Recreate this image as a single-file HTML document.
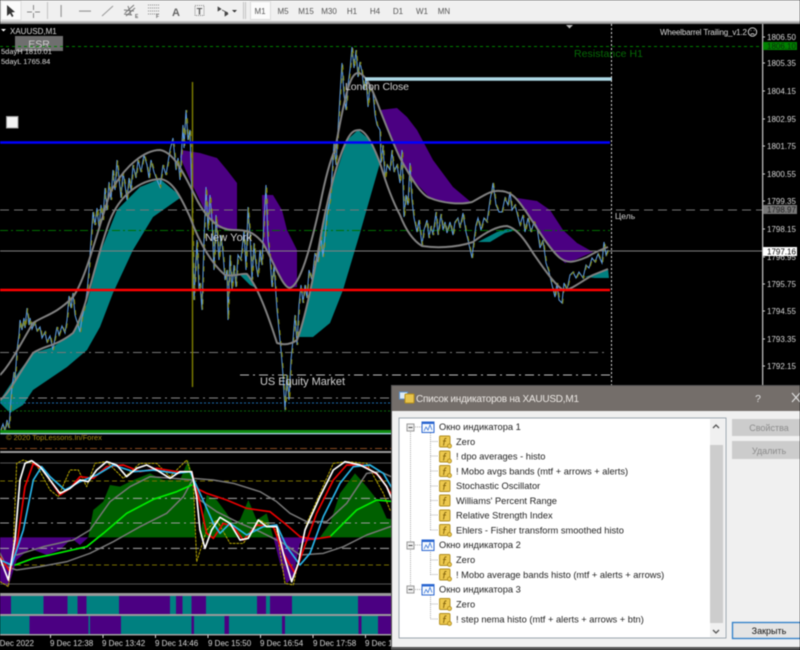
<!DOCTYPE html>
<html><head><meta charset="utf-8"><title>XAUUSD,M1</title>
<style>
html,body{margin:0;padding:0;background:#000;width:800px;height:650px;overflow:hidden}
svg{display:block;font-family:"Liberation Sans",Tahoma,sans-serif;filter:blur(.4px)}
.ax{font-size:8px;fill:#d8d8d8}
.tb{font-size:8px;fill:#555;text-anchor:middle}
.tr{font-size:9.3px;fill:#222}
.tm{font-size:8px;fill:#d8d8d8}
</style></head><body>
<svg width="800" height="650" viewBox="0 0 800 650" xmlns="http://www.w3.org/2000/svg">
<defs>
<path id="pr" d="M0 432L3 424L5 432L7 420L9 428L11 398L12 387L14 372L15 380L17 350L19 335L20 320L22 330L24 318L25 328L27 308L29 325L30 318L32 329L35 322L37 331L40 327L42 338L45 332L47 342L50 336L53 350L55 338L57 327L59 335L62 326L65 333L67 320L69 296L71 308L73 293L75 315L78 325L80 332L82 318L85 305L87 292L89 270L91 240L93 212L95 225L97 208L99 228L101 205L103 220L105 188L107 210L109 182L111 200L113 170L115 190L117 160L119 178L121 198L123 172L125 185L127 200L129 178L131 190L133 165L136 178L138 160L141 172L144 155L147 165L149 178L151 160L154 172L157 180L160 187L163 165L166 175L170 150L173 138L176 170L178 158L180 180L183 125L184 148L186 110L188 140L190 130L192 200L194 300L197 240L199 290L200 283L202 310L204 240L206 187L208 230L210 195L212 220L214 270L216 215L219 260L221 235L223 253L225 280L227 270L228 320L230 255L232 290L234 265L236 287L238 255L241 260L244 230L246 270L248 207L250 235L252 280L254 243L256 265L258 277L260 250L262 265L264 220L266 185L268 240L270 258L272 287L274 265L277 310L279 330L281 350L283 375L285 410L287 375L289 400L291 360L293 340L295 315L297 345L299 305L301 285L303 303L305 285L307 298L309 270L312 280L315 253L318 262L321 237L323 257L325 235L327 215L330 200L332 175L334 143L336 165L338 130L340 95L342 63L344 95L346 110L348 85L350 70L352 47L354 68L356 50L358 77L360 62L362 72L364 90L366 78L368 107L370 85L373 93L375 115L377 125L380 130L381 163L383 145L385 180L387 165L390 170L392 150L394 172L397 165L400 183L402 150L404 217L406 195L408 205L410 163L412 200L414 218L417 232L419 220L422 245L424 230L427 220L429 238L431 226L433 235L436 212L438 235L441 214L443 230L445 222L447 233L450 222L453 235L455 222L458 218L460 228L463 213L466 232L468 240L472 258L474 240L476 225L478 218L481 230L484 218L487 222L490 200L492 190L493 183L496 205L499 212L502 212L505 198L508 205L510 192L512 210L515 205L517 213L520 225L523 215L525 232L528 218L531 232L534 222L537 227L540 248L543 240L546 263L549 272L552 285L555 297L557 283L559 300L562 303L564 283L567 290L570 275L573 272L576 278L579 272L583 278L586 265L589 268L592 258L595 262L598 254L602 263L604 242L606 255L608 250"/>
</defs>

<rect x="0" y="0" width="800" height="650" fill="#000"/>

<!-- ribbons -->
<g stroke="none">
<path fill="#008080" d="M0 400L20 370L33 353L53 347L73 333L87 303L100 253L117 210L140 187L160 179L177 193L180 198L153 217L133 250L113 293L100 327L87 350L67 367L33 390L23 405L10 413L0 403Z"/>
<path fill="#008080" d="M240 275L247 274L258 289L250 285Z"/>
<path fill="#008080" d="M298 337L310 293L320 240L333 183L347 140L358 130L370 140L380 163L360 233L343 290L330 323L313 337L300 337Z"/>
<path fill="#008080" d="M478 242L497 232L507 229L517 230L505 233L490 242Z"/>
<path fill="#008080" d="M585 277L608 269L609 278L595 278Z"/>
<path fill="#4b0082" d="M181 150L200 153L217 158L227 170L237 183L237 230L217 228L203 207L190 180L180 157Z"/>
<path fill="#4b0082" d="M262 195L273 195L282 210L287 230L297 250L297 287L287 288L275 270L263 243Z"/>
<path fill="#4b0082" d="M380 110L397 108L407 117L417 130L433 160L453 187L472 203L450 203L430 198L413 180L400 158L388 130Z"/>
<path fill="#4b0082" d="M517 198L537 201L550 210L563 230L577 243L593 252L575 260L565 263L555 254L540 234L527 213Z"/>
</g>

<!-- horizontal lines under price -->
<line x1="0" y1="46.5" x2="762" y2="46.5" stroke="#008000" stroke-dasharray="3 3"/>
<line x1="0" y1="210" x2="762" y2="210" stroke="#777" stroke-dasharray="9 5"/>
<line x1="0" y1="230.5" x2="610" y2="230.5" stroke="#007000" stroke-dasharray="8 3 2 3"/>
<line x1="0" y1="251" x2="762" y2="251" stroke="#808080"/>
<line x1="0" y1="352.5" x2="605" y2="352.5" stroke="#777" stroke-dasharray="9 4 2 4"/>
<line x1="240" y1="375" x2="610" y2="375" stroke="#bbb" stroke-dasharray="9 4 2 4"/>
<line x1="0" y1="398" x2="392" y2="398" stroke="#888" stroke-dasharray="9 4 2 4"/>
<line x1="0" y1="403" x2="392" y2="403" stroke="#1e6eb0" stroke-dasharray="2 2"/>
<line x1="0" y1="411" x2="392" y2="411" stroke="#0a6a0a" stroke-dasharray="2 2"/>

<!-- price -->
<g fill="none" stroke-width="1">
<use href="#pr" stroke="#5f9fe6"/>
<use href="#pr" stroke="#808000" stroke-dasharray="5 6" transform="translate(.8,0)"/>
<line x1="192.500" y1="82" x2="192.500" y2="387" stroke="#808000" stroke-width="1.400"/>
</g>

<!-- envelope -->
<g fill="none" stroke="#808080" stroke-width="2" stroke-linejoin="round">
<path d="M0 375C10 365 20 345 33 323C45 315 55 315 73 297C85 280 95 240 110 193C125 165 145 150 160 150C172 152 180 165 197 200C205 215 217 230 233 230C245 230 252 230 263 243C275 265 283 288 290 288C300 285 310 250 320 205C325 180 330 160 335 150C345 95 350 73 358 73C365 73 372 88 380 110C388 130 395 148 400 158C408 172 420 195 430 198C442 203 460 205 472 202C482 197 490 190 500 191C512 191 518 200 527 213C535 225 550 250 560 258C568 264 575 262 587 257C595 252 600 250 608 247"/>
<path d="M0 400C8 395 15 380 33 353C45 345 55 347 73 333C87 310 95 260 110 220C120 195 140 180 160 179C172 180 180 195 190 217C200 245 213 265 225 275C235 277 240 273 247 274C258 287 268 315 277 343C283 345 290 345 297 340C305 320 315 270 320 240C327 200 337 160 347 140C352 130 356 130 360 130C368 133 375 150 380 163C385 180 392 200 400 215C405 228 412 240 422 246C435 248 455 248 473 242C482 235 495 226 507 226C515 228 522 235 533 253C540 263 553 283 563 290C570 291 580 282 593 275C598 273 603 271 608 269"/>
</g>

<!-- heavy lines -->
<line x1="0" y1="142.5" x2="610" y2="142.5" stroke="#0000ff" stroke-width="2.4"/>
<line x1="0" y1="290" x2="610" y2="290" stroke="#ff0000" stroke-width="2.4"/>
<line x1="365" y1="79" x2="612" y2="79" stroke="#add8e6" stroke-width="3.4"/>
<line x1="611.5" y1="24" x2="611.5" y2="385" stroke="#ddd" stroke-dasharray="2 2"/>

<!-- chart labels -->
<g fill="#d0d0d0">
<text x="345" y="90" font-size="10.5px" textLength="64">London Close</text>
<text x="205" y="241" font-size="11px" textLength="47">New York</text>
<text x="260" y="385" font-size="11px" textLength="85">US Equity Market</text>
<text x="615" y="219" font-size="8.5px">Цель</text>
</g>
<text x="574" y="57" font-size="10.5px" fill="#056a05" textLength="69">Resistance H1</text>
<text x="660" y="35" font-size="8px" fill="#ddd" textLength="87">Wheelbarrel Trailing_v1.2</text>
<circle cx="752.5" cy="32" r="4.2" fill="none" stroke="#ddd" stroke-width=".9"/>
<path d="M750.5 30.5h.8M753.8 30.5h.8M750.5 34.6q2-1.8 4 0" stroke="#ddd" stroke-width=".8" fill="none"/>
<path d="M566 25h7l-3.5 3.5z" fill="#bbb"/>

<path d="M1 29h5l-2.500 2.500z" fill="#fff"/>
<text x="10" y="34" font-size="8px" fill="#ddd">XAUUSD,M1</text>
<rect x="15" y="36" width="48" height="15" fill="#6f6f6f"/>
<text x="39" y="47.500" font-size="10.500px" fill="#ccc" text-anchor="middle">ESR</text>
<line x1="0" y1="46.500" x2="130" y2="46.500" stroke="#008000" stroke-dasharray="3 3"/>
<text x="1" y="54" font-size="7.500px" fill="#ddd">5dayH 1810.01</text>
<text x="1" y="64" font-size="7.500px" fill="#ddd">5dayL 1765.84</text>
<rect x="6.500" y="116.500" width="11.500" height="11.500" fill="#f4f4f4" stroke="#999"/>

<!-- bottom of main window -->
<rect x="0" y="430" width="392" height="3" fill="#0f8a10"/>
<rect x="0" y="433" width="392" height="1.300" fill="#a8d8e8"/>
<text x="6" y="440" font-size="7.500px" fill="#a88a10">© 2020 TopLessons.In/Forex</text>
<line x1="0" y1="448.500" x2="392" y2="448.500" stroke="#8a4a20" stroke-dasharray="7 3 2 3"/>

<!-- subwindow -->
<rect x="0" y="451" width="392" height="2" fill="#9a9a9a"/>
<g transform="translate(0,430) scale(.33333)" fill="none">
<path stroke="none" fill="#005f00" d="M265 322L280 240L310 215L330 165L360 170L400 150L450 130L490 150L540 150L565 90L580 150L585 322ZM600 322L620 195L650 210L680 250L700 280L720 270L745 210L770 270L800 250L820 322ZM960 322L990 280L1020 190L1065 130L1100 170L1140 220L1160 265L1185 270L1185 322Z"/>
<path stroke="none" fill="#4b0082" d="M0 322L265 322L240 345L215 325L180 360L140 375L90 355L50 390L25 470L0 455ZM820 322L960 322L900 340L880 440L860 460L840 400Z"/>
<g stroke-width="3">
<line x1="0" y1="99" x2="1185" y2="99" stroke="#555"/>
<line x1="0" y1="153" x2="1185" y2="153" stroke="#7a7000" stroke-dasharray="15 9"/>
<line x1="0" y1="205" x2="1185" y2="205" stroke="#aaa" stroke-dasharray="27 12 6 12"/>
<line x1="0" y1="279" x2="1185" y2="279" stroke="#999" stroke-dasharray="27 12 6 12"/>
<line x1="0" y1="355" x2="1185" y2="355" stroke="#aaa" stroke-dasharray="27 12 6 12"/>
<line x1="0" y1="405" x2="1185" y2="405" stroke="#7a7000" stroke-dasharray="15 9"/>
<line x1="0" y1="462" x2="1185" y2="462" stroke="#555"/>
</g>
<g stroke-linejoin="round" stroke-linecap="round">
<path stroke="#b8a800" stroke-width="3" stroke-dasharray="6 5" d="M0 455L25 470L40 350L50 100L70 90L110 105L150 180L175 200L210 120L235 120L260 170L285 100L320 95L370 145L420 100L470 100L510 140L560 90L580 150L590 395L620 300L650 270L690 340L730 340L780 270L830 300L855 460L880 465L920 280L1000 100L1040 95L1100 100L1150 190L1170 240L1185 250"/>
<path stroke="#777" stroke-width="4.500" d="M0 370L20 410L50 420L120 410L200 395L270 370L340 335L420 290L500 250L550 200L580 145L640 150L700 160L780 185L830 215L870 250L920 275L980 275L1040 220L1100 130L1140 125L1185 145"/>
<path stroke="#777" stroke-width="4.500" d="M50 375L130 350L220 330L270 300L330 215L390 170L450 140L520 145L580 150L600 210L650 245L720 280L780 305L850 340L900 375L970 370L1030 350L1100 315L1185 285"/>
<path stroke="#00ee00" stroke-width="5" d="M45 405L100 385L150 375L260 350L310 310L380 250L460 208L530 185L575 165M990 320L1020 290L1070 240L1130 210L1185 215"/>
<path stroke="#e80000" stroke-width="5" d="M580 170L620 190L680 210L740 235L810 245L860 285L900 320L940 328L990 320"/>
<path stroke="#ee0000" stroke-width="5" d="M0 380L30 425L50 350L75 170L100 100L130 120L180 195L210 175L240 140L280 145L320 110L370 105L420 125L470 115L530 125L575 125L600 220L620 310L640 325L670 280L700 290L730 330L770 285L820 290L850 370L885 430L910 360L950 250L1000 150L1040 105L1090 105L1140 140L1185 210"/>
<path stroke="#28b4e8" stroke-width="5" d="M0 390L35 405L70 300L100 150L125 110L150 140L195 180L240 155L290 135L340 105L400 125L460 120L530 130L570 125L600 190L640 280L660 310L690 280L740 315L790 290L830 285L860 350L900 405L930 370L970 260L1020 160L1060 110L1110 105L1150 130L1185 190"/>
<path stroke="#fff" stroke-width="5" d="M0 385L25 450L45 330L60 150L75 100L95 92L120 110L150 150L180 190L210 175L240 150L265 155L290 120L320 95L350 105L380 140L410 115L440 105L470 120L510 145L540 125L575 125L590 200L600 300L615 355L635 300L660 262L690 280L720 330L745 325L775 270L800 290L830 290L850 370L875 455L895 400L915 300L960 200L1000 120L1035 95L1080 105L1130 130L1160 170L1185 230"/>
</g>
</g>

<!-- strips -->
<rect x="0" y="593" width="392" height="3" fill="#9a9a9a"/>
<rect x="0" y="596" width="392" height="18" fill="#008080"/>
<g fill="#4b0082">
<rect x="0" y="596" width="11" height="18"/><rect x="43.500" y="596" width="24" height="18"/><rect x="77.500" y="596" width="9" height="18"/><rect x="119" y="596" width="51" height="18"/><rect x="176" y="596" width="6.500" height="18"/><rect x="191.500" y="596" width="14.500" height="18"/><rect x="257" y="596" width="9" height="18"/><rect x="270" y="596" width="22" height="18"/><rect x="358" y="596" width="34" height="18"/>
</g>
<rect x="0" y="614" width="392" height="2" fill="#9a9a9a"/>
<rect x="0" y="616" width="392" height="18" fill="#008080"/>
<g fill="#4b0082">
<rect x="29.500" y="616" width="59" height="18"/><rect x="90" y="616" width="31" height="18"/><rect x="191.500" y="616" width="2.500" height="18"/><rect x="224.500" y="616" width="4.500" height="18"/><rect x="282" y="616" width="3" height="18"/><rect x="358.500" y="616" width="3" height="18"/><rect x="378" y="616" width="14" height="18"/>
</g>
<rect x="0" y="634" width="392" height="1.500" fill="#a0a0a0"/>

<!-- time axis -->
<g stroke="#ddd"><path d="M50.500 635v3M103 635v3M155.500 635v3M208 635v3M260.500 635v3M313 635v3M365.500 635v3"/></g>
<g class="tm">
<text x="-7" y="646" class="tm">9 Dec 2022</text>
<text x="50" y="646" class="tm">9 Dec 12:38</text>
<text x="102" y="646" class="tm">9 Dec 13:42</text>
<text x="155" y="646" class="tm">9 Dec 14:46</text>
<text x="208" y="646" class="tm">9 Dec 15:50</text>
<text x="260" y="646" class="tm">9 Dec 16:54</text>
<text x="313" y="646" class="tm">9 Dec 17:58</text>
<text x="365" y="646" class="tm">9 Dec 19:02</text>
</g>

<!-- price axis -->
<rect x="762" y="24" width="1.300" height="362" fill="#bbb"/>
<g stroke="#ccc"><path d="M763 37h2M763 63h2M763 91h2M763 119h2M763 146h2M763 174h2M763 201h2M763 229h2M763 257h2M763 284h2M763 311h2M763 339h2M763 366h2"/></g>
<g>
<text x="767" y="40" class="ax">1806.50</text>
<text x="767" y="66" class="ax">1805.35</text>
<text x="767" y="94" class="ax">1804.15</text>
<text x="767" y="122" class="ax">1802.95</text>
<text x="767" y="149" class="ax">1801.75</text>
<text x="767" y="177" class="ax">1800.55</text>
<text x="767" y="204" class="ax">1799.35</text>
<text x="767" y="232" class="ax">1798.15</text>
<text x="767" y="260" class="ax">1796.95</text>
<text x="767" y="287" class="ax">1795.75</text>
<text x="767" y="314" class="ax">1794.55</text>
<text x="767" y="342" class="ax">1793.35</text>
<text x="767" y="369" class="ax">1792.15</text>
</g>
<rect x="763" y="42" width="34" height="8" fill="#008000"/>
<text x="767" y="49" font-size="8px" fill="#0a2a0a">1806.10</text>
<rect x="763" y="205" width="34" height="9" fill="#777"/>
<text x="767" y="212.500" font-size="8px" fill="#222">1798.97</text>
<rect x="763" y="247" width="34" height="9" fill="#fff"/>
<text x="767" y="254.500" font-size="8px" fill="#000">1797.16</text>

<!-- toolbar -->
<rect x="0" y="0" width="800" height="21" fill="#f0f0f0"/>
<rect x="0" y="21" width="800" height="1.500" fill="#bdbdbd"/>
<rect x="0" y="22.500" width="800" height="1.500" fill="#8e8e8e"/>
<rect x="1" y="1" width="20" height="19" fill="#fbfbfb" stroke="#dcdcdc"/>
<path d="M7 5L7 16L10 13.500L12 17L13.500 16L11.500 12.500L15 12Z" fill="#333"/>
<path d="M27 12h5M35 12h5M33.500 5v5M33.500 13v5" stroke="#888" fill="none"/>
<rect x="47" y="2" width="1" height="17" fill="#c4c4c4"/>
<rect x="60.500" y="5" width="1.200" height="12" fill="#999"/>
<rect x="79" y="10.500" width="12" height="1.200" fill="#999"/>
<path d="M102 16L113 6" stroke="#999" fill="none"/>
<path d="M125 13L134 5M126 16L135 8M124 10L134 11M128 6L131 15M124 14L132 15" stroke="#777" fill="none"/>
<text x="135" y="18" font-size="5px" font-weight="bold" fill="#666">E</text>
<path d="M148 5h12M148 8h12M148 11h12M148 14h12" stroke="#888" stroke-dasharray="1 1" fill="none"/>
<text x="156" y="18" font-size="5px" font-weight="bold" fill="#666">F</text>
<text x="176" y="16" font-size="11px" font-weight="bold" fill="#666" text-anchor="middle">A</text>
<rect x="195" y="5.500" width="9" height="10" fill="none" stroke="#888" stroke-dasharray="1 1"/>
<text x="199.500" y="14.500" font-size="9px" font-weight="bold" fill="#555" text-anchor="middle">T</text>
<path d="M218 7l3 2-3 2zM222 10l6 3M225 12l3 2-3 2z" fill="#444" stroke="#444" stroke-width=".7"/>
<path d="M232 10h5l-2.500 2.500z" fill="#333"/>
<rect x="243" y="2" width="1" height="17" fill="#c4c4c4"/>
<rect x="245" y="2" width="1" height="17" fill="#c4c4c4"/>
<rect x="250.500" y="1.500" width="20" height="18" fill="#fbfbfb" stroke="#dcdcdc"/>
<text x="260" y="14" class="tb">M1</text>
<text x="283" y="14" class="tb">M5</text>
<text x="306" y="14" class="tb">M15</text>
<text x="329" y="14" class="tb">M30</text>
<text x="352" y="14" class="tb">H1</text>
<text x="375" y="14" class="tb">H4</text>
<text x="398" y="14" class="tb">D1</text>
<text x="422" y="14" class="tb">W1</text>
<text x="444" y="14" class="tb">MN</text>

<!-- dialog -->
<rect x="391" y="385" width="409" height="265" fill="#555"/>
<rect x="392" y="386" width="408" height="25" fill="#746e6a"/>
<rect x="392" y="411" width="408" height="236" fill="#f0f0f0"/>
<rect x="399" y="418" width="327" height="220" fill="#fff" stroke="#9aa5ad"/>
<rect x="710" y="419" width="15" height="218" fill="#f0f0f0"/>
<rect x="710" y="445" width="13" height="178" fill="#cdcdcd"/>
<path d="M713 428l3-3 3 3M713 630l3 3 3-3" stroke="#555" stroke-width="1.300" fill="none"/>
<rect x="399.500" y="392" width="8" height="7" fill="#dceaf6" stroke="#5c8fc8"/>
<rect x="405" y="394" width="9" height="9" rx="1" fill="#e8c44c" stroke="#b89018"/>
<text x="416" y="402" font-size="10px" fill="#ece8e4" textLength="163">Список индикаторов на XAUUSD,M1</text>
<text x="758" y="402" font-size="10.500px" fill="#ddd" text-anchor="middle">?</text>
<path d="M792 393l8 9M800 393l-8 9" stroke="#ddd" stroke-width="1.200" fill="none"/>
<rect x="732" y="419" width="68" height="17" fill="#cccccc"/>
<text x="769" y="431" font-size="9px" fill="#8c8c8c" text-anchor="middle">Свойства</text>
<rect x="732" y="441" width="68" height="18" fill="#cccccc"/>
<text x="769" y="454" font-size="9px" fill="#8c8c8c" text-anchor="middle">Удалить</text>
<rect x="732.500" y="622.500" width="68" height="16" fill="#e4e4e4" stroke="#2d7dc8" stroke-width="1.300"/>
<text x="769" y="634" font-size="9px" fill="#111" text-anchor="middle">Закрыть</text>

<!-- tree lines -->
<g stroke="#aaa" stroke-dasharray="1 1" fill="none">
<path d="M410.500 432V586"/>
<path d="M430.500 433V530M430.500 550V575M430.500 595V619"/>
<path d="M415 427h7M415 545h7M415 589.500h7"/>
<path d="M430.500 441.500h8M430.500 456h8M430.500 471h8M430.500 486h8M430.500 500.500h8M430.500 515h8M430.500 530h8M430.500 560h8M430.500 574.500h8M430.500 604h8M430.500 619h8"/>
</g>
<g fill="#eee" stroke="#999">
<rect x="407" y="424" width="7" height="7"/><rect x="407" y="542" width="7" height="7"/><rect x="407" y="586" width="7" height="7"/>
</g>
<path d="M408.500 427.500h4M408.500 545.500h4M408.500 589.500h4" stroke="#444"/>
<g fill="#f6fafe" stroke="#2a66d0">
<rect x="422" y="422" width="12" height="10.500"/><rect x="422" y="540" width="12" height="10.500"/><rect x="422" y="584.500" width="12" height="10.500"/>
</g>
<path d="M422 423h12M422 541h12M422 585.500h12" stroke="#2a66d0" stroke-width="2"/>
<path d="M424 431l2-4 2 3 2-5 2 5M424 549l2-4 2 3 2-5 2 5M424 593.500l2-4 2 3 2-5 2 5" fill="none" stroke="#3a76d8" stroke-width=".8"/>
<g fill="#ecc84e" stroke="#b08c1c" stroke-width=".9">
<rect x="439.500" y="436" width="10.500" height="11" rx="1"/><rect x="439.500" y="451" width="10.500" height="11" rx="1"/><rect x="439.500" y="465.500" width="10.500" height="11" rx="1"/><rect x="439.500" y="480.500" width="10.500" height="11" rx="1"/><rect x="439.500" y="495" width="10.500" height="11" rx="1"/><rect x="439.500" y="510" width="10.500" height="11" rx="1"/><rect x="439.500" y="524.500" width="10.500" height="11" rx="1"/><rect x="439.500" y="554.500" width="10.500" height="11" rx="1"/><rect x="439.500" y="569" width="10.500" height="11" rx="1"/><rect x="439.500" y="598.500" width="10.500" height="11" rx="1"/><rect x="439.500" y="613.500" width="10.500" height="11" rx="1"/>
</g>
<g fill="none" stroke="#8a6a10" stroke-width="1">
<path d="M446.500 438.500q-2-.5-2 1.500l-1 5.500M443 441h3M446.500 453.500q-2-.5-2 1.500l-1 5.500M443 456h3M446.500 468q-2-.5-2 1.500l-1 5.500M443 470.500h3M446.500 483q-2-.5-2 1.500l-1 5.500M443 485.500h3M446.500 497.500q-2-.5-2 1.500l-1 5.500M443 500h3M446.500 512.500q-2-.5-2 1.500l-1 5.500M443 515h3M446.500 527q-2-.5-2 1.500l-1 5.500M443 529.500h3M446.500 557q-2-.5-2 1.500l-1 5.500M443 559.500h3M446.500 571.500q-2-.5-2 1.500l-1 5.500M443 574h3M446.500 601q-2-.5-2 1.500l-1 5.500M443 603.500h3M446.500 616q-2-.5-2 1.500l-1 5.500M443 618.500h3"/>
</g>
<g fill="#ecc84e" stroke="#a88414" stroke-width=".8">
<circle cx="449.500" cy="446" r="2"/><circle cx="449.500" cy="461" r="2"/><circle cx="449.500" cy="475.500" r="2"/><circle cx="449.500" cy="534.500" r="2"/><circle cx="449.500" cy="564.500" r="2"/><circle cx="449.500" cy="579" r="2"/><circle cx="449.500" cy="608.500" r="2"/><circle cx="449.500" cy="623.500" r="2"/>
</g>
<text x="439" y="430" class="tr">Окно индикатора 1</text>
<text x="456" y="445" class="tr">Zero</text>
<text x="456" y="459.500" class="tr">! dpo averages - histo</text>
<text x="456" y="474.500" class="tr">! Mobo avgs bands (mtf + arrows + alerts)</text>
<text x="456" y="489" class="tr">Stochastic Oscillator</text>
<text x="456" y="504" class="tr">Williams' Percent Range</text>
<text x="456" y="518.500" class="tr">Relative Strength Index</text>
<text x="456" y="533.500" class="tr">Ehlers - Fisher transform smoothed histo</text>
<text x="439" y="548" class="tr">Окно индикатора 2</text>
<text x="456" y="563" class="tr">Zero</text>
<text x="456" y="578" class="tr">! Mobo average bands histo (mtf + alerts + arrows)</text>
<text x="439" y="592.500" class="tr">Окно индикатора 3</text>
<text x="456" y="607.500" class="tr">Zero</text>
<text x="456" y="622.500" class="tr">! step nema histo (mtf + alerts + arrows + btn)</text>
</svg>
</body></html>
